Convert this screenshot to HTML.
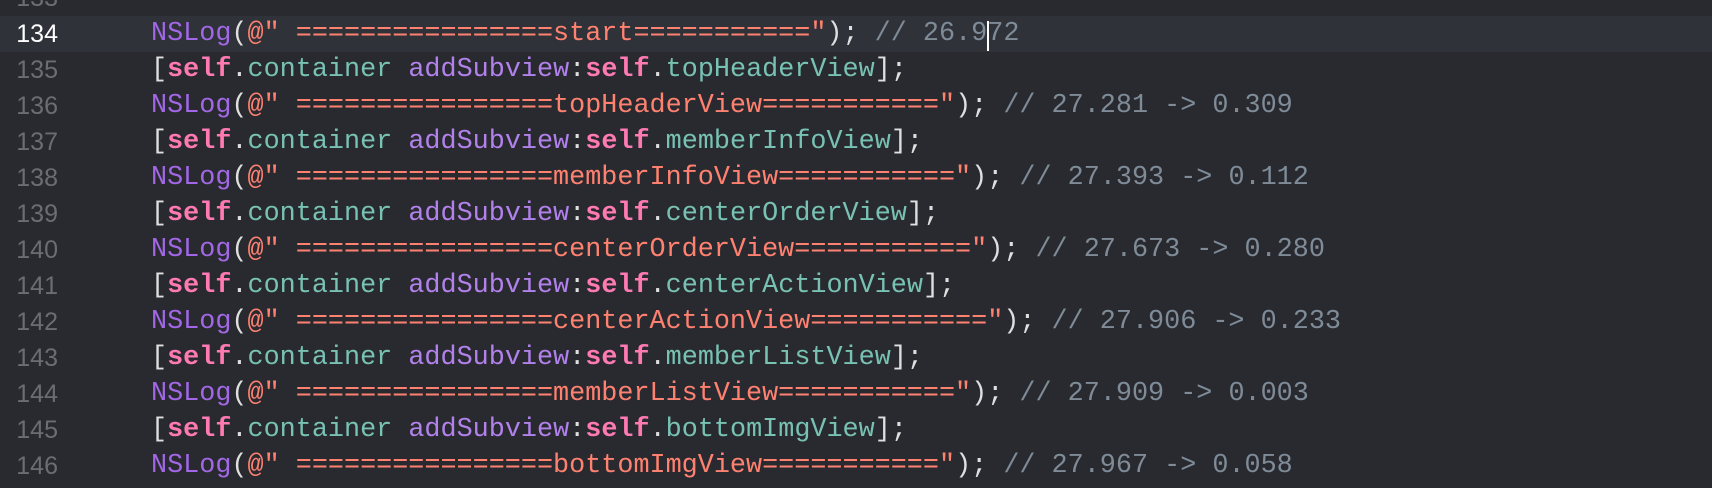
<!DOCTYPE html>
<html><head><meta charset="utf-8"><style>
html,body{margin:0;padding:0;}
body{width:1712px;height:488px;background:#292a30;position:relative;overflow:hidden;}
.band{position:absolute;left:0;top:16px;width:1712px;height:36px;background:#2f3239;}
.ln{position:absolute;left:0;width:58px;text-align:right;font-family:"Liberation Sans",sans-serif;font-size:25px;color:#6c6c71;height:36px;line-height:36px;}
.ln.cur{color:#ffffff;}
.code{position:absolute;left:151px;font-family:"Liberation Mono",monospace;font-size:26.8px;white-space:pre;color:#dfdfe0;height:36px;line-height:36px;}
.f{color:#a167e6}.s{color:#ff8170}.k{color:#ff7ab2;font-weight:bold}.p{color:#78c2b3}.m{color:#b281eb}.c{color:#7f8c98}
.cursor{position:absolute;left:987px;top:21px;width:2px;height:30px;background:#fff;}
</style></head><body>
<div class="band"></div>
<div class="ln" style="top:-20px">133</div>
<div class="ln cur" style="top:16px">134</div>
<div class="ln" style="top:52px">135</div>
<div class="ln" style="top:88px">136</div>
<div class="ln" style="top:124px">137</div>
<div class="ln" style="top:160px">138</div>
<div class="ln" style="top:196px">139</div>
<div class="ln" style="top:232px">140</div>
<div class="ln" style="top:268px">141</div>
<div class="ln" style="top:304px">142</div>
<div class="ln" style="top:340px">143</div>
<div class="ln" style="top:376px">144</div>
<div class="ln" style="top:412px">145</div>
<div class="ln" style="top:448px">146</div>

<div class="code" style="top:16px"><span class="f">NSLog</span>(<span class="s">@" ================start==========="</span>); <span class="c">// 26.972</span></div>
<div class="code" style="top:52px">[<span class="k">self</span>.<span class="p">container</span> <span class="m">addSubview</span>:<span class="k">self</span>.<span class="p">topHeaderView</span>];</div>
<div class="code" style="top:88px"><span class="f">NSLog</span>(<span class="s">@" ================topHeaderView==========="</span>); <span class="c">// 27.281 -&gt; 0.309</span></div>
<div class="code" style="top:124px">[<span class="k">self</span>.<span class="p">container</span> <span class="m">addSubview</span>:<span class="k">self</span>.<span class="p">memberInfoView</span>];</div>
<div class="code" style="top:160px"><span class="f">NSLog</span>(<span class="s">@" ================memberInfoView==========="</span>); <span class="c">// 27.393 -&gt; 0.112</span></div>
<div class="code" style="top:196px">[<span class="k">self</span>.<span class="p">container</span> <span class="m">addSubview</span>:<span class="k">self</span>.<span class="p">centerOrderView</span>];</div>
<div class="code" style="top:232px"><span class="f">NSLog</span>(<span class="s">@" ================centerOrderView==========="</span>); <span class="c">// 27.673 -&gt; 0.280</span></div>
<div class="code" style="top:268px">[<span class="k">self</span>.<span class="p">container</span> <span class="m">addSubview</span>:<span class="k">self</span>.<span class="p">centerActionView</span>];</div>
<div class="code" style="top:304px"><span class="f">NSLog</span>(<span class="s">@" ================centerActionView==========="</span>); <span class="c">// 27.906 -&gt; 0.233</span></div>
<div class="code" style="top:340px">[<span class="k">self</span>.<span class="p">container</span> <span class="m">addSubview</span>:<span class="k">self</span>.<span class="p">memberListView</span>];</div>
<div class="code" style="top:376px"><span class="f">NSLog</span>(<span class="s">@" ================memberListView==========="</span>); <span class="c">// 27.909 -&gt; 0.003</span></div>
<div class="code" style="top:412px">[<span class="k">self</span>.<span class="p">container</span> <span class="m">addSubview</span>:<span class="k">self</span>.<span class="p">bottomImgView</span>];</div>
<div class="code" style="top:448px"><span class="f">NSLog</span>(<span class="s">@" ================bottomImgView==========="</span>); <span class="c">// 27.967 -&gt; 0.058</span></div>
<div class="cursor"></div>
</body></html>
